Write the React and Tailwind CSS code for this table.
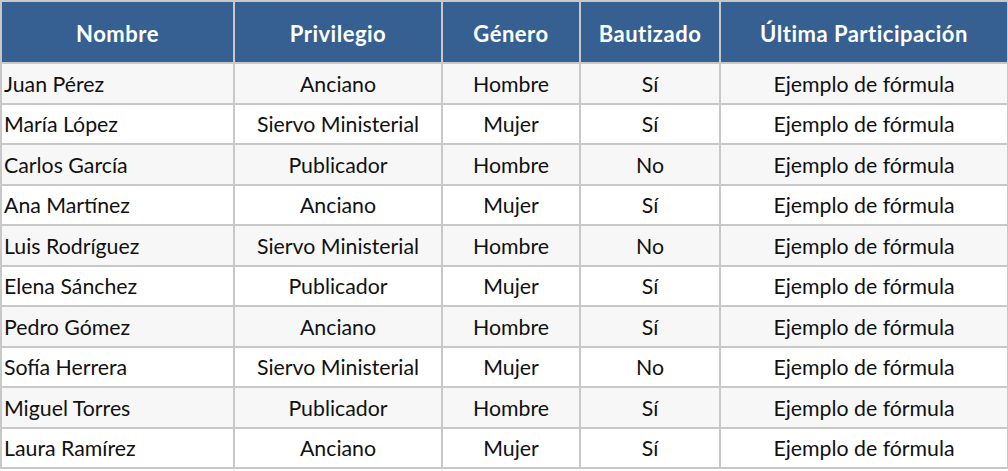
import React from "react";

const rows = [
  ["Juan Pérez", "Anciano", "Hombre", "Sí"],
  ["María López", "Siervo Ministerial", "Mujer", "Sí"],
  ["Carlos García", "Publicador", "Hombre", "No"],
  ["Ana Martínez", "Anciano", "Mujer", "Sí"],
  ["Luis Rodríguez", "Siervo Ministerial", "Hombre", "No"],
  ["Elena Sánchez", "Publicador", "Mujer", "Sí"],
  ["Pedro Gómez", "Anciano", "Hombre", "Sí"],
  ["Sofía Herrera", "Siervo Ministerial", "Mujer", "No"],
  ["Miguel Torres", "Publicador", "Hombre", "Sí"],
  ["Laura Ramírez", "Anciano", "Mujer", "Sí"],
];

const headers = ["Nombre", "Privilegio", "Género", "Bautizado", "Última Participación"];

export default function App() {
  return (
    <div className="w-[1008px] h-[471px] bg-white font-['Lato',sans-serif]">
      <table className="w-[1007px] table-fixed border-collapse border-2 border-[#c8c8c8]">
        <colgroup>
          <col className="w-[233px]" />
          <col className="w-[208px]" />
          <col className="w-[138px]" />
          <col className="w-[140px]" />
          <col className="w-[288px]" />
        </colgroup>
        <thead>
          <tr className="h-[62px]">
            {headers.map((h) => (
              <th
                key={h}
                className="border-2 border-[#c8c8c8] bg-[#366092] text-white text-[22px] tracking-[0.5px] font-bold text-center p-0 pt-[2px] whitespace-nowrap"
              >
                {h}
              </th>
            ))}
          </tr>
        </thead>
        <tbody>
          {rows.map((r, i) => (
            <tr key={r[0]} className={`h-[40.5px] ${i % 2 === 0 ? "bg-[#f7f7f7]" : "bg-white"}`}>
              <td className="border-2 border-[#c8c8c8] text-[21.3px] text-[#111] text-left pl-[2px] pt-[3px] pb-0 whitespace-nowrap">{r[0]}</td>
              <td className="border-2 border-[#c8c8c8] text-[21.3px] text-[#111] text-center px-0 pt-[3px] pb-0 whitespace-nowrap">{r[1]}</td>
              <td className="border-2 border-[#c8c8c8] text-[21.3px] text-[#111] text-center px-0 pt-[3px] pb-0">{r[2]}</td>
              <td className="border-2 border-[#c8c8c8] text-[21.3px] text-[#111] text-center px-0 pt-[3px] pb-0">{r[3]}</td>
              <td className="border-2 border-[#c8c8c8] text-[21.3px] text-[#111] text-center px-0 pt-[3px] pb-0 whitespace-nowrap">Ejemplo de fórmula</td>
            </tr>
          ))}
        </tbody>
      </table>
    </div>
  );
}
